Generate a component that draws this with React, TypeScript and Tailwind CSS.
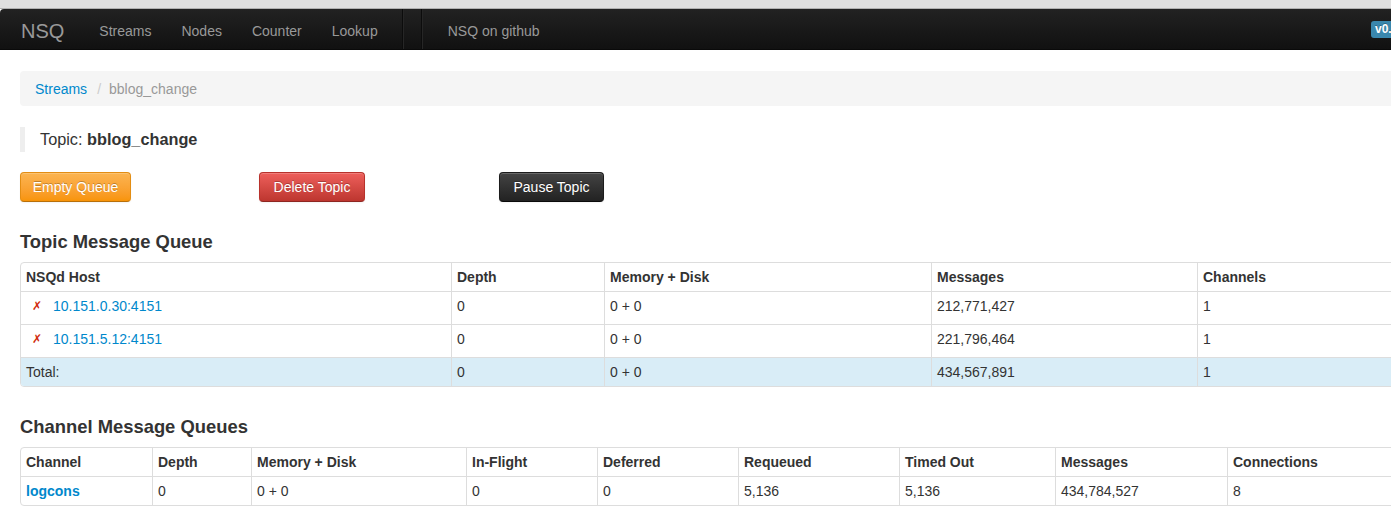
import React from "react";

const topCols = [430, 153, 327, 266, 284];
const chanCols = [131, 99, 215, 131, 141, 161, 156, 172, 234];

function Btn({ label, cls }: { label: string; cls: string }) {
  return (
    <button
      className={
        "h-[30px] rounded-[4px] border text-[14px] leading-[20px] text-white [text-shadow:0_-1px_0_rgba(0,0,0,0.25)] shadow-[inset_0_1px_0_rgba(255,255,255,0.2),0_1px_2px_rgba(0,0,0,0.05)] " +
        cls
      }
    >
      {label}
    </button>
  );
}

export default function App() {
  const topRows = [
    ["10.151.0.30:4151", "0", "0 + 0", "212,771,427", "1"],
    ["10.151.5.12:4151", "0", "0 + 0", "221,796,464", "1"],
  ];
  const chanHeaders = [
    "Channel",
    "Depth",
    "Memory + Disk",
    "In-Flight",
    "Deferred",
    "Requeued",
    "Timed Out",
    "Messages",
    "Connections",
  ];
  const chanRow = ["0", "0 + 0", "0", "0", "5,136", "5,136", "434,784,527", "8"];

  return (
    <div className="w-[1391px] h-[529px] overflow-hidden bg-white font-['Liberation_Sans',Arial,sans-serif] text-[14px] text-[#333]">
      {/* browser strip */}
      <div className="h-[9px] bg-[#dfdfdf] border-b border-[#b0b0b0]" />
      {/* navbar */}
      <div className="h-[41px] pt-[4px] flex items-center bg-gradient-to-b from-[#222222] to-[#111111] rounded-tl-[4px] border-b border-[#0a0a0a] overflow-hidden">
        <span className="pl-[21px] pr-[20px] text-[20px] text-[#999] leading-[20px]">NSQ</span>
        <span className="px-[15px] text-[#999]">Streams</span>
        <span className="px-[15px] text-[#999]">Nodes</span>
        <span className="px-[15px] text-[#999]">Counter</span>
        <span className="px-[15px] text-[#999]">Lookup</span>
        <div className="ml-[9px] w-[21px] h-[41px] -mt-[4px] flex justify-between">
          <div className="h-full w-[2px] border-l border-[#0c0c0c] border-r border-r-[#262626]" />
          <div className="h-full w-[2px] border-l border-[#0c0c0c] border-r border-r-[#262626]" />
        </div>
        <span className="ml-[10px] px-[15px] text-[#999]">NSQ on github</span>
        <span className="ml-auto -mt-[4px] mr-[-24px] w-[44px] h-[17px] shrink-0 rounded-[3px] bg-[#3a87ad] text-white font-bold text-[12px] leading-[17px] px-[4px] [text-shadow:0_-1px_0_rgba(0,0,0,0.25)]">
          v0.3.2
        </span>
      </div>

      <div className="pl-[20px]">
        {/* breadcrumb */}
        <div className="mt-[21px] h-[35px] pt-[8px] pb-[7px] px-[15px] bg-[#f5f5f5] rounded-l-[4px] leading-[20px] flex">
          <span className="text-[#0088cc]">Streams</span>
          <span className="px-[5px] text-[#ccc] ml-[5px]">/</span>
          <span className="text-[#999] ml-[3px]">bblog_change</span>
        </div>

        {/* blockquote */}
        <div className="mt-[21px] h-[25px] border-l-[5px] border-[#eeeeee] pl-[15px] text-[16.3px] leading-[25px]">
          Topic: <strong>bblog_change</strong>
        </div>

        {/* buttons */}
        <div className="mt-[20px] grid grid-cols-[239px_240px_auto]">
          <div>
            <Btn
              label="Empty Queue"
              cls="w-[111px] bg-gradient-to-b from-[#fbb450] to-[#f89406] border-[#e38d13] border-b-[#b86f09]"
            />
          </div>
          <div>
            <Btn
              label="Delete Topic"
              cls="w-[106px] bg-gradient-to-b from-[#ee5f5b] to-[#bd362f] border-[#b8322c] border-b-[#8e2621]"
            />
          </div>
          <div>
            <Btn
              label="Pause Topic"
              cls="w-[105px] bg-gradient-to-b from-[#444444] to-[#222222] border-[#1c1c1c] border-b-[#0a0a0a]"
            />
          </div>
        </div>

        {/* Topic Message Queue */}
        <h4 className="mt-[30px] mb-[10px] text-[18.4px] leading-[20px] font-bold">Topic Message Queue</h4>
        <div className="w-[1460px] border border-[#dddddd] rounded-[4px] overflow-hidden">
          <table className="table-fixed border-separate border-spacing-0 w-full">
            <colgroup>
              {topCols.map((w, i) => (
                <col key={i} style={{ width: w }} />
              ))}
            </colgroup>
            <thead>
              <tr>
                {["NSQd Host", "Depth", "Memory + Disk", "Messages", "Channels"].map((h, i) => (
                  <th
                    key={h}
                    className={
                      "h-[28px] align-top pt-[4px] px-[5px] text-left font-bold leading-[20px] " +
                      (i > 0 ? "border-l border-[#dddddd]" : "")
                    }
                  >
                    {h}
                  </th>
                ))}
              </tr>
            </thead>
            <tbody>
              {topRows.map((r) => (
                <tr key={r[0]}>
                  {r.map((c, i) => (
                    <td
                      key={i}
                      className={
                        "h-[33px] align-top pt-[4px] px-[5px] leading-[20px] border-t border-[#dddddd] " +
                        (i > 0 ? "border-l" : "")
                      }
                    >
                      {i === 0 ? (
                        <span className="flex items-center">
                          <span className="ml-[6px] w-[21px] text-[12px] text-[#d02a0a] font-['DejaVu_Sans',sans-serif] italic">
                            ✗
                          </span>
                          <span className="text-[#0088cc]">{c}</span>
                        </span>
                      ) : (
                        c
                      )}
                    </td>
                  ))}
                </tr>
              ))}
              <tr>
                {["Total:", "0", "0 + 0", "434,567,891", "1"].map((c, i) => (
                  <td
                    key={i}
                    className={
                      "h-[29px] align-top pt-[4px] px-[5px] leading-[20px] bg-[#d9edf7] border-t border-[#dddddd] " +
                      (i > 0 ? "border-l" : "")
                    }
                  >
                    {c}
                  </td>
                ))}
              </tr>
            </tbody>
          </table>
        </div>

        {/* Channel Message Queues */}
        <h4 className="mt-[30px] mb-[10px] text-[18.4px] leading-[20px] font-bold">Channel Message Queues</h4>
        <div className="w-[1440px] border border-[#dddddd] rounded-[4px] overflow-hidden">
          <table className="table-fixed border-separate border-spacing-0 w-full">
            <colgroup>
              {chanCols.map((w, i) => (
                <col key={i} style={{ width: w }} />
              ))}
            </colgroup>
            <thead>
              <tr>
                {chanHeaders.map((h, i) => (
                  <th
                    key={h}
                    className={
                      "h-[28px] align-top pt-[4px] px-[5px] text-left font-bold leading-[20px] " +
                      (i > 0 ? "border-l border-[#dddddd]" : "")
                    }
                  >
                    {h}
                  </th>
                ))}
              </tr>
            </thead>
            <tbody>
              <tr>
                <td className="h-[29px] align-top pt-[4px] px-[5px] leading-[20px] border-t border-[#dddddd]">
                  <span className="text-[#0088cc] font-bold">logcons</span>
                </td>
                {chanRow.map((c, i) => (
                  <td
                    key={i}
                    className="h-[29px] align-top pt-[4px] px-[5px] leading-[20px] border-t border-l border-[#dddddd]"
                  >
                    {c}
                  </td>
                ))}
              </tr>
            </tbody>
          </table>
        </div>
      </div>
    </div>
  );
}
